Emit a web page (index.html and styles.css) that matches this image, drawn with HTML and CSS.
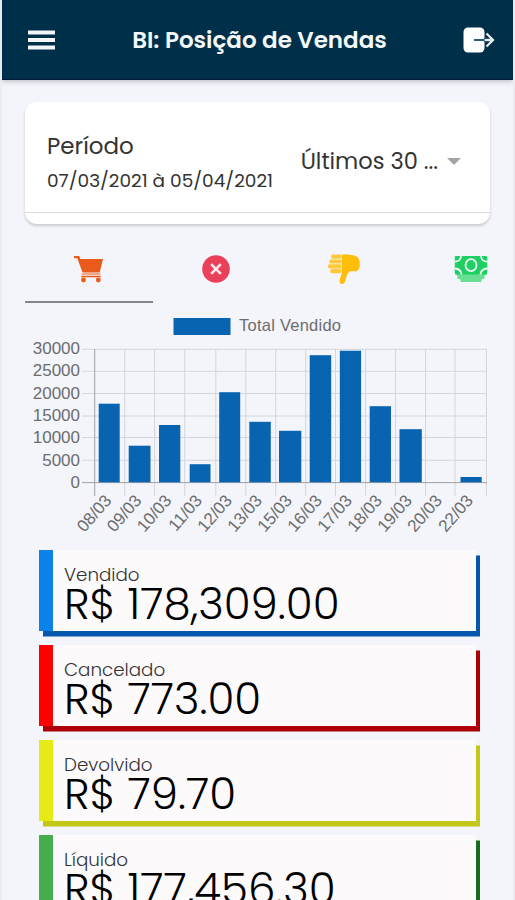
FILE: index.html
```html
<!DOCTYPE html>
<html lang="pt-BR">
<head>
    <meta charset="UTF-8">
    <meta name="viewport" content="width=device-width, initial-scale=1.0">
    <title>BI: Posição de Vendas</title>
    <link rel="stylesheet" href="styles.css">
</head>
<body>
    <div class="app">
        <header class="topbar">
            <button class="icon-button" aria-label="Menu">
                <svg width="28" height="20" viewBox="0 0 28 20" fill="#f3f5f7"><path d="M0 .5h27v4H0zM0 8h27v4H0zM0 15.500h27v4H0z"/></svg>
            </button>
            <h1>BI: Posição de Vendas</h1>
            <button class="icon-button" aria-label="Sair">
                <svg width="32" height="26" viewBox="0 0 32 26" fill="none">
                    <rect x=".5" y=".5" width="21" height="25" rx="4.500" fill="#fff"/>
                    <path d="M11 13h11" stroke="#22606b" stroke-width="2"/>
                    <path d="M21 13h8M23.500 6.500l6.500 6.500-6.500 6.500" stroke="#003049" stroke-width="4"/>
                    <path d="M21.500 13h8M23.500 6.500l6.500 6.500-6.500 6.500" stroke="#e4ebee" stroke-width="2.300"/>
                </svg>
            </button>
        </header>

        <main class="content">
            <section class="period-card">
                <div class="period-body">
                    <div>
                        <div class="period-label">Período</div>
                        <div class="period-range">07/03/2021 à 05/04/2021</div>
                    </div>
                    <div class="period-select">
                        <span>Últimos 30 ...</span>
                        <i class="caret"></i>
                    </div>
                </div>
            </section>

            <!-- Abas -->
            <nav class="tabs">
                <a class="tab active">
                    <svg width="30" height="28" viewBox="0 0 30 28" fill="#ea5b1b">
                        <path d="M0 1h5.200l1.200 3H29l-3.300 13.500H8.500L3.300 3.300H0z"/>
                        <path d="M7.800 18.500h18.700v1H7.800zM7.300 20.700h19.500v1.500H7.300z"/>
                        <circle cx="9.500" cy="25" r="2.400"/><circle cx="24.300" cy="25" r="2.400"/>
                    </svg>
                </a>
                <a class="tab">
                    <svg width="28" height="28" viewBox="0 0 28 28">
                        <circle cx="14" cy="14" r="13.800" fill="#eb4059"/>
                        <path d="M9.200 9.200l9.600 9.600M18.800 9.200l-9.600 9.600" stroke="#fbe9ee" stroke-width="2.600"/>
                    </svg>
                </a>
                <a class="tab">
                    <svg width="32" height="30" viewBox="0 0 32 30" fill="#fdbe0b">
                        <path d="M13.800.8L18 .3l8.500 1.200c3.400.7 5.300 4 5.300 8.500 0 4.300-1.300 7.300-4.700 7.300h-5.300c-2.300 2.300-3.500 4.800-4 8-.4 2.900-1.800 4.700-4 4.700-2 0-2.600-1.700-2.100-4l2-7z"/>
                        <g fill="#fec93b">
                            <rect x="3.200" y=".6" width="10.300" height="4.200" rx="1.600"/>
                            <rect x="1.200" y="5.400" width="12.300" height="4.200" rx="1.600"/>
                            <rect x="0" y="10.200" width="13.500" height="4.200" rx="1.600"/>
                            <rect x="2.200" y="15" width="11.300" height="4.200" rx="1.600"/>
                        </g>
                    </svg>
                </a>
                <a class="tab">
                    <svg width="34" height="28" viewBox="0 0 34 28" fill="none">
                        <path d="M1 18h32l-2.500 3v3H28l-1 3H7l-1-3H3.500v-3z" fill="#68df92"/>
                        <rect x=".8" y="1" width="32.400" height="18.500" rx="1" fill="#1ed062"/>
                        <g stroke="#f3f6fa" stroke-width="1.800">
                            <ellipse cx="17" cy="10.200" rx="5.500" ry="6"/>
                            <path d="M1 6.700c3.200 0 5.800-2.300 6-5.700M33 6.700c-3.200 0-5.800-2.300-6-5.700M1 13.500c3.600.2 6.200 2.600 6.700 6M33 13.500c-3.600.2-6.200 2.600-6.700 6"/>
                        </g>
                    </svg>
                </a>
            </nav>

            <!-- Gráfico de vendas -->
            <svg class="chart" width="487" height="247" viewBox="2 303 487 247">
                <rect x="173.500" y="318" width="57" height="17" fill="#0864b1"/>
                <text class="legend" x="239" y="331" textLength="102">Total Vendido</text>
                <path class="grid" d="M82 349.300H487M82 371.300H487M82 393.500H487M82 416H487M82 437.500H487M82 460.300H487M124.700 349V496M154.600 349V496M184.700 349V496M215.800 349V496M245.800 349V496M275.700 349V496M305.700 349V496M335.500 349V496M365.500 349V496M395.500 349V496M425.500 349V496M455 349V496M486.500 349V496"/>
                <path class="axis" d="M94.700 349V496M82 482.600H487"/>
                <g fill="#0864b1">
                    <rect x="98.700" y="403.700" width="21" height="78.600"/>
                    <rect x="128.700" y="445.700" width="21.800" height="36.600"/>
                    <rect x="159" y="425" width="21.300" height="57.300"/>
                    <rect x="189.700" y="464.200" width="20.800" height="18.100"/>
                    <rect x="219.200" y="392.200" width="21" height="90.100"/>
                    <rect x="249.300" y="421.800" width="21.500" height="60.500"/>
                    <rect x="279" y="430.800" width="22.300" height="51.500"/>
                    <rect x="309.700" y="355.200" width="21.500" height="127.100"/>
                    <rect x="339.800" y="350.700" width="21.300" height="131.600"/>
                    <rect x="369.700" y="406.200" width="21.300" height="76.100"/>
                    <rect x="399.500" y="429.200" width="22.300" height="53.100"/>
                    <rect x="460.500" y="477" width="21.200" height="5.300"/>
                </g>
                <g class="y-labels">
                    <text x="80" y="354">30000</text>
                    <text x="80" y="376">25000</text>
                    <text x="80" y="398.500">20000</text>
                    <text x="80" y="420.500">15000</text>
                    <text x="80" y="443">10000</text>
                    <text x="80" y="465.500">5000</text>
                    <text x="80" y="487.500">0</text>
                </g>
                <g class="x-labels">
                    <text transform="translate(112.500 501) rotate(-49)">08/03</text>
                    <text transform="translate(142.500 501) rotate(-49)">09/03</text>
                    <text transform="translate(172.500 501) rotate(-49)">10/03</text>
                    <text transform="translate(203 501) rotate(-49)">11/03</text>
                    <text transform="translate(233 501) rotate(-49)">12/03</text>
                    <text transform="translate(263 501) rotate(-49)">13/03</text>
                    <text transform="translate(293 501) rotate(-49)">15/03</text>
                    <text transform="translate(323 501) rotate(-49)">16/03</text>
                    <text transform="translate(353 501) rotate(-49)">17/03</text>
                    <text transform="translate(383 501) rotate(-49)">18/03</text>
                    <text transform="translate(413 501) rotate(-49)">19/03</text>
                    <text transform="translate(443 501) rotate(-49)">20/03</text>
                    <text transform="translate(474 501) rotate(-49)">22/03</text>
                </g>
            </svg>

            <!-- Totais -->
            <section class="totals">
                <div class="total sold">
                    <div class="total-label">Vendido</div>
                    <div class="total-value">R$ 178,309.00</div>
                </div>
                <div class="total canceled">
                    <div class="total-label">Cancelado</div>
                    <div class="total-value">R$ 773.00</div>
                </div>
                <div class="total returned">
                    <div class="total-label">Devolvido</div>
                    <div class="total-value">R$ 79.70</div>
                </div>
                <div class="total net">
                    <div class="total-label">Líquido</div>
                    <div class="total-value">R$ 177,456.30</div>
                </div>
            </section>
        </main>
    </div>
</body>
</html>
```
FILE: styles.css
```css
* {
    box-sizing: border-box;
}

body {
    margin: 0;
    height: 900px;
    overflow: hidden;
    background: #ececf0;
    font-family: "Poppins", "Inter", sans-serif;
    color: #333;
}

.app {
    width: 511px;
    height: 900px;
    margin-left: 2px;
    background: #f3f5fa;
    overflow: hidden;
}

.topbar {
    display: flex;
    align-items: center;
    justify-content: space-between;
    height: 80px;
    padding: 0 18px 0 26px;
    background: #003049;
    border-bottom: 1px solid #00153c;
    box-shadow: 0 1px 5px rgba(40, 30, 60, 0.3);
}

.topbar h1 {
    margin: 0;
    font-size: 23px;
    font-weight: 600;
    color: #f5f8fa;
    white-space: nowrap;
}

.icon-button {
    display: flex;
    padding: 0;
    border: none;
    background: none;
}

.content {
    padding-top: 22px;
}

.period-card {
    width: 465px;
    height: 122px;
    margin-left: 23px;
    background: #fff;
    border-radius: 12px;
    box-shadow: 0 2px 3px rgba(0, 0, 0, 0.18);
}

.period-body {
    display: flex;
    justify-content: space-between;
    height: 111px;
    padding: 27px 29px 0 22px;
    border-bottom: 1px solid #dcdcdf;
}

.period-label {
    font-size: 23px;
    line-height: 34px;
}

.period-range {
    margin-top: 4px;
    font-size: 18.500px;
    line-height: 28px;
    white-space: nowrap;
}

.period-select {
    display: flex;
    align-items: center;
    gap: 9px;
    height: 64px;
    font-size: 22.500px;
    white-space: nowrap;
}

.caret {
    border: 7px solid transparent;
    border-top-color: #a5a5a8;
    border-bottom: none;
}

.tabs {
    display: grid;
    grid-template-columns: repeat(4, 127.500px);
    height: 79px;
    margin-left: 23px;
}

.tab {
    display: flex;
    align-items: center;
    justify-content: center;
    padding-top: 13px;
    border-bottom: 2px solid transparent;
}

.tab.active {
    border-bottom-color: #858689;
}

.chart {
    display: block;
    font-family: "Liberation Sans", Arial, sans-serif;
    font-size: 17px;
    fill: #6c6c6e;
}

.legend {
    font-size: 16.500px;
}

.grid {
    stroke: #d4d6da;
    stroke-width: 1;
}

.axis {
    stroke: #a0a1a4;
    stroke-width: 1;
}

.y-labels,
.x-labels {
    text-anchor: end;
}

.totals {
    display: flex;
    flex-direction: column;
    gap: 14.500px;
    margin-left: 37px;
}

.total {
    flex: none;
    width: 437px;
    height: 80.500px;
    padding: 16px 0 0 11px;
    border-left: 14px solid;
    background: #fcfafb;
}

.total-label {
    font-size: 18.300px;
    font-weight: 300;
    line-height: 18px;
}

.total-value {
    font-size: 43.600px;
    font-weight: 300;
    line-height: 39px;
    color: #000;
    white-space: nowrap;
}

.sold {
    border-color: #0b82ea;
    box-shadow: 4px 5.500px #0557ae;
}

.canceled {
    border-color: #fe0000;
    box-shadow: 4px 5.500px #ae0006;
}

.returned {
    border-color: #e6eb17;
    box-shadow: 4px 5.500px #c3c816;
}

.net {
    border-color: #46ad4d;
    box-shadow: 4px 5.500px #176b1c;
}
```
